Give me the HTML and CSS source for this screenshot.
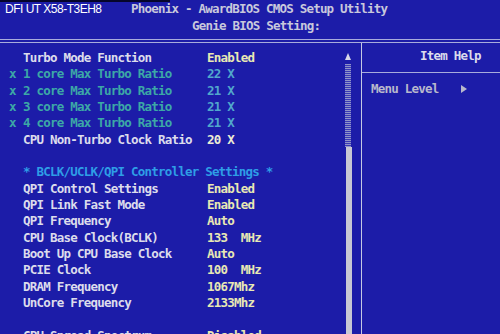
FILE: index.html
```html
<!DOCTYPE html>
<html lang="en">
<head>
    <meta charset="UTF-8">
    <meta name="viewport" content="width=device-width, initial-scale=1.0">
    <title>Phoenix - AwardBIOS CMOS Setup Utility</title>
    <link rel="stylesheet" href="styles.css">
</head>
<body>
    <div class="screen">
        <div class="brand">DFI UT X58-T3EH8</div>

        <div class="header">
            <div class="title">Phoenix - AwardBIOS CMOS Setup Utility</div>
            <div class="subtitle">Genie BIOS Setting:</div>
        </div>

        <div class="frame">
            <div class="panes">
                <div class="main">
                    <div class="list">
                        <div class="row"><span class="mark"></span><span class="label">Turbo Mode Function</span><span class="value">Enabled</span></div>
                        <div class="row off"><span class="mark">x</span><span class="label">1 core Max Turbo Ratio</span><span class="value">22 X</span></div>
                        <div class="row off"><span class="mark">x</span><span class="label">2 core Max Turbo Ratio</span><span class="value">21 X</span></div>
                        <div class="row off"><span class="mark">x</span><span class="label">3 core Max Turbo Ratio</span><span class="value">21 X</span></div>
                        <div class="row off"><span class="mark">x</span><span class="label">4 core Max Turbo Ratio</span><span class="value">21 X</span></div>
                        <div class="row"><span class="mark"></span><span class="label">CPU Non-Turbo Clock Ratio</span><span class="value bright">20 X</span></div>
                        <div class="row"></div>
                        <div class="row section"><span class="mark"></span><span>* BCLK/UCLK/QPI Controller Settings *</span></div>
                        <div class="row"><span class="mark"></span><span class="label">QPI Control Settings</span><span class="value">Enabled</span></div>
                        <div class="row"><span class="mark"></span><span class="label">QPI Link Fast Mode</span><span class="value">Enabled</span></div>
                        <div class="row"><span class="mark"></span><span class="label">QPI Frequency</span><span class="value">Auto</span></div>
                        <div class="row"><span class="mark"></span><span class="label">CPU Base Clock(BCLK)</span><span class="value">133  MHz</span></div>
                        <div class="row"><span class="mark"></span><span class="label">Boot Up CPU Base Clock</span><span class="value">Auto</span></div>
                        <div class="row"><span class="mark"></span><span class="label">PCIE Clock</span><span class="value">100  MHz</span></div>
                        <div class="row"><span class="mark"></span><span class="label">DRAM Frequency</span><span class="value">1067Mhz</span></div>
                        <div class="row"><span class="mark"></span><span class="label">UnCore Frequency</span><span class="value">2133Mhz</span></div>
                        <div class="row"></div>
                        <div class="row"><span class="mark"></span><span class="label">CPU Spread Spectrum</span><span class="value">Disabled</span></div>
                    </div>
                    <div class="scroll">
                        <div class="arrow"></div>
                        <div class="track"></div>
                        <div class="thumb"></div>
                    </div>
                </div>

                <div class="help">
                    <div class="help-title">Item Help</div>
                    <div class="help-body">
                        <span>Menu Level</span>
                        <span class="pointer"></span>
                    </div>
                </div>
            </div>
        </div>
    </div>
</body>
</html>
```

FILE: styles.css
```css
body {
    margin: 0;
    padding: 0;
    background-color: #1c1ca8;
    font-family: "DejaVu Sans Mono", "Liberation Mono", monospace;
    font-weight: bold;
    font-size: 12.5px;
    letter-spacing: -0.78px;
    color: #dcdcec;
    overflow: hidden;
}
.screen {
    position: relative;
    width: 500px;
    height: 334px;
    overflow: hidden;
}
.screen::before {
    content: "";
    position: absolute;
    left: 0;
    top: 0;
    width: 170px;
    height: 2px;
    background-color: #05052a;
}
.brand {
    position: absolute;
    left: 5px;
    top: 3px;
    font-family: "Liberation Sans", Arial, sans-serif;
    font-weight: normal;
    font-size: 12px;
    letter-spacing: -0.5px;
    color: #ffffff;
    line-height: 13px;
}
.header {
    height: 34px;
    margin-bottom: 5px;
    line-height: 17px;
    color: #c8c8dc;
}
.title {
    padding-left: 131px;
    white-space: pre;
}
.subtitle {
    padding-left: 192px;
    white-space: pre;
}
.frame {
    border-top: 1px solid #a8acdc;
}
.panes {
    margin-top: 2px;
    border-top: 1px solid #a8acdc;
    display: flex;
    height: 300px;
}
.main {
    width: 361px;
    display: flex;
}
.list {
    flex: 1;
    padding-top: 7px;
    padding-left: 9px;
}
.row {
    display: flex;
    height: 16.33px;
    line-height: 16.33px;
    white-space: pre;
}
.mark {
    width: 14px;
}
.label {
    width: 184px;
}
.value {
    color: #e8e8b4;
}
.value.bright {
    color: #ececd4;
}
.row.off .mark,
.row.off .label {
    color: #3ca8a6;
}
.row.off .value {
    color: #52a8cc;
}
.row.section {
    color: #2e9ee6;
}
.scroll {
    width: 9px;
    margin-right: 9px;
    padding-top: 10px;
    display: flex;
    flex-direction: column;
    align-items: center;
}
.arrow {
    width: 0;
    height: 0;
    border-left: 3px solid transparent;
    border-right: 3px solid transparent;
    border-bottom: 7px solid #d8d8e8;
    margin-bottom: 4px;
}
.track {
    width: 6px;
    height: 83px;
    background-image: repeating-linear-gradient(0deg, #9094c8 0px, #9094c8 1px, #3a3ab4 1px, #3a3ab4 2px);
    margin-left: 1px;
}
.thumb {
    width: 6px;
    flex: 1;
    background-color: #c8c8d4;
    margin-left: 2px;
}
.help {
    flex: 1;
    border-left: 1px solid #c4c8e4;
}
.help-title {
    padding: 5px 0 8px 58px;
    line-height: 16px;
    border-bottom: 1px solid #a8acdc;
    color: #dcdcec;
}
.help-body {
    padding: 8px 0 0 9px;
    line-height: 16px;
    color: #b8b8cc;
    display: flex;
    align-items: center;
    gap: 23px;
}
.pointer {
    width: 0;
    height: 0;
    border-top: 4px solid transparent;
    border-bottom: 4px solid transparent;
    border-left: 6px solid #b8b8cc;
}
```
